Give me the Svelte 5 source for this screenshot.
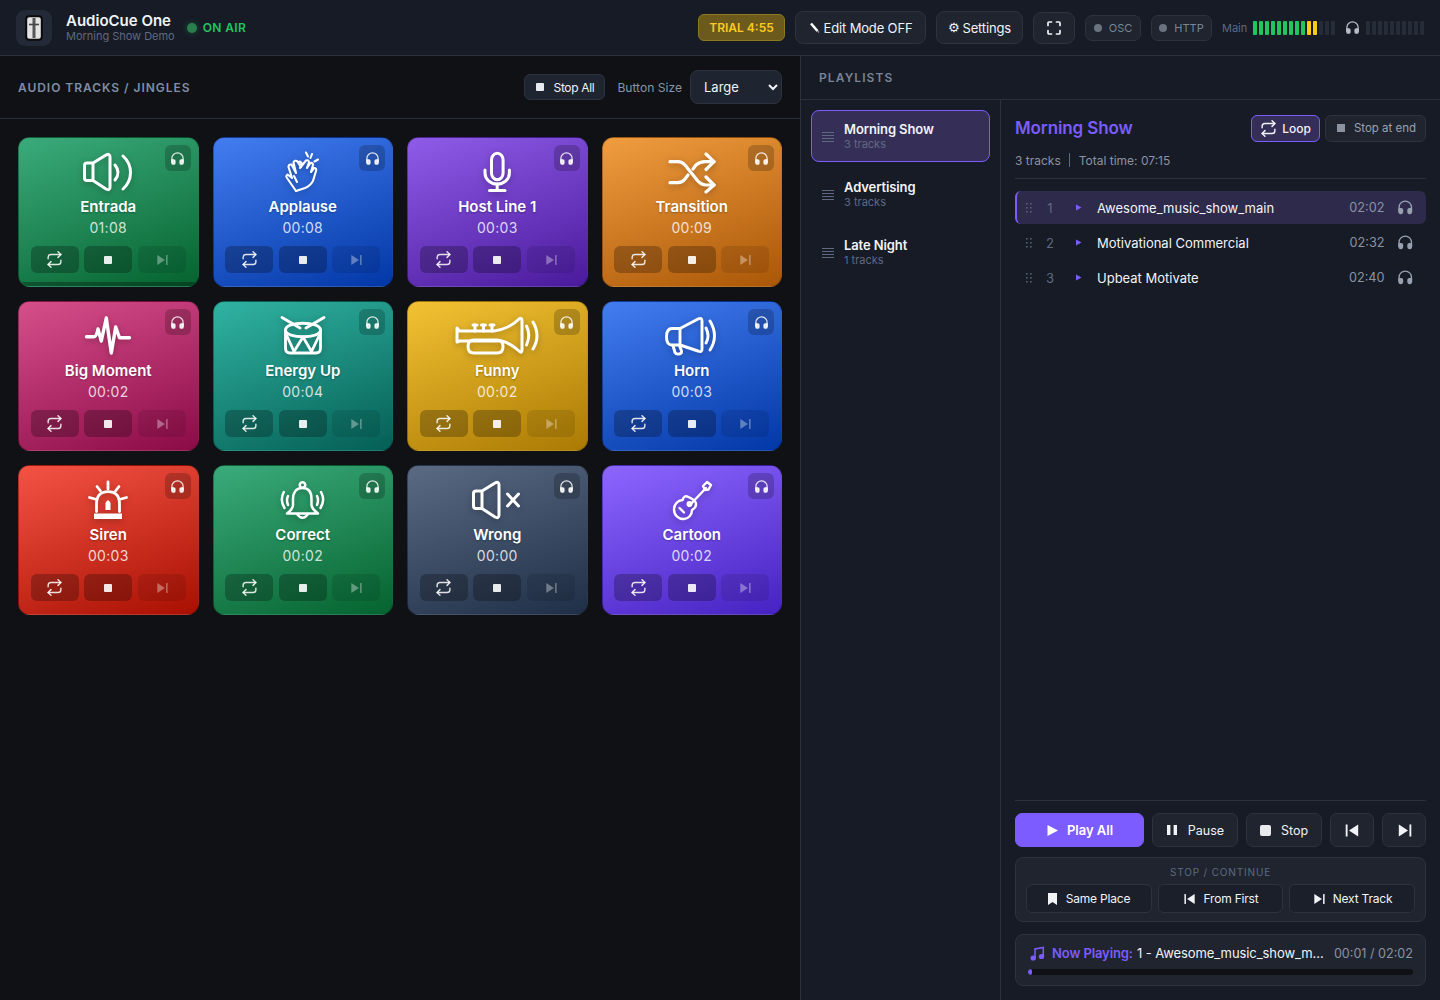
<script>
  const speaker = 'M20 12 L33 4 Q37 2 37 6 V36 Q37 40 33 38 L20 29.5 H14 Q11.5 29.5 11.5 27 V14.5 Q11.5 12 14 12 Z M20 12 V29.5';
  const art = {
    speaker: { s: [speaker, 'M42 14 Q48 21.5 42 29', 'M50 5 C60 14 60 29 50 38'] },
    clap: { s: [
      'M28 40 L19 27 Q17.5 25 19.5 23.5 L24 27 L20.5 16 Q20.5 13 23.5 13.5 L28 22 L25.5 11.5 Q26 9 29 10 L33 16',
      'M28 40 L37 37 Q42 35 45 30 L48 20 Q49 17 46 17 L43 21 L45 14 Q45 11.5 42.5 12 L39 17 L41 11 Q40.5 8.5 38 9.5 L32 17 L33.5 12 Q32.5 10 30.5 11',
      'M26 25 L29 31 M38 1.5 L40 5.5 M44 3 L42.5 7 M50 8.5 L46.5 10.5'], w: 2.1 },
    mic: { s: ['M29.5 9 a5.8 6.8 0 0 1 11.6 0 V22 a5.8 6.8 0 0 1 -11.6 0 Z', 'M23 19 V22 a12.2 11 0 0 0 24.4 0 V19', 'M35.2 33 V39.5', 'M27.5 39.5 H43'], w: 3 },
    shuffle: { s: ['M13 10.7 H21 Q25 10.7 28 14 L40 29 Q44 34 49 34 H57', 'M13 31.7 H21 Q25 31.7 28 28 L31 24', 'M36 18 L39 14 Q43 10.7 48 10.7 H57', 'M49 3 L57 10.7 L49 18.5', 'M49 26 L57 34 L49 41'], w: 3.2 },
    pulse: { s: ['M13.5 21.7 H21 Q23.5 21.5 25 14 L28.3 26 L33.3 3 L38.3 38 L42.7 12 L46.5 22.7 H56.5'], w: 3.4 },
    drum: { s: ['M14 2.5 L32 13', 'M56 2.5 L38 13', 'M17.5 15 C17.5 6 52.5 6 52.5 15 C52.5 24 17.5 24 17.5 15 Z', 'M17.5 15 V33 Q17.5 38 22 38 H48 Q52.5 38 52.5 33 V15', 'M19 21 L26 36.5 L35 22 L43.5 36.5 L51 21'], w: 2.8 },
    trumpet: { s: ['M-5 13 L-2.5 16 H32 Q47 14 57 4 Q60 2 60 6 V35 Q60 39 57 36 Q48 28 40 26 H-2.5 L-5 27 Z', 'M12 25 H35 Q41 25 41 31.5 Q41 38 35 38 H12 Q6 38 6 31.5 Q6 25 12 25 Z', 'M13 10 V16', 'M21.5 10 V16', 'M30 10 V16', 'M11 10 H15', 'M19.5 10 H23.5', 'M28 10 H32', 'M64.5 11 Q69 20 64.5 30', 'M71 7 Q79 21 71 34'], w: 3 },
    horn: { s: ['M23 13.5 L41 4 Q45 2 45 6 V34 Q45 38 41 36 L23 30 H15 Q9.5 30 9.5 22 Q9.5 13.5 15 13.5 Z', 'M23 13.5 V30', 'M16 30.5 L18 37.5 Q19 39.5 22 39 Q25 38.5 24.5 36 L22.5 30.5', 'M49 13 Q53 21 49 28', 'M53 6 Q62 21 53 35'], w: 2.9 },
    siren: { s: ['M23.5 32.5 V25 Q23.5 12.7 35 12.7 Q46.5 12.7 46.5 25 V32.5', 'M35 3 V10', 'M24 7.5 L27.5 12', 'M46 7.5 L42.5 12', 'M16.5 18.5 L22 20', 'M53.5 18.5 L48 20'], w: 2.8,
      f: ['M21 34.5 H49 V40 H21 Z', 'M32.5 31 V24 Q35 18.5 37.5 24 V31 Z'] },
    bell: { s: ['M34.5 9 C27 9 25 15 25 20 V26 Q25 30 19 34.5 H50 Q44 30 43.5 26 V20 C43.5 15 42 9 34.5 9 Z', 'M34.5 3.2 a2.8 2.8 0 1 1 -0.01 0', 'M29 35 Q34.5 42.5 40 35', 'M15.8 13 Q11.5 21 16.5 29', 'M20 17 Q18 21 20 26', 'M53 13 Q57.5 21 52.5 29', 'M49 17 Q51 21 49 26'], w: 2.5 },
    mute: { s: [speaker, 'M45.5 15 L56.5 27', 'M56.5 15 L45.5 27'] },
    guitar: { s: ['M31.5 18 C28 16 26.5 18 25.5 21 C20.5 21.5 17 25.5 17 30.5 C17 36.5 22 40.5 27 40 C31.5 39.5 35 36 35 31 C37.5 29.5 40 26.5 38.5 23 C37.5 20.5 34 19.5 31.5 18 Z', 'M32 27 L49 9', 'M46 7 L50 3 L54 6 L51.5 10.5 L48 11 Z', 'M22.5 29 L27 33.5'], w: 2.4,
      f: ['M29.5 25 a3 3 0 1 1 3 3 a3 3 0 0 1 -3 -3 Z'] }
  };
  const tracks = [
    { n: 'Entrada', t: '01:08', c: 'green', i: 'speaker', p: true },
    { n: 'Applause', t: '00:08', c: 'blue', i: 'clap' },
    { n: 'Host Line 1', t: '00:03', c: 'violet', i: 'mic' },
    { n: 'Transition', t: '00:09', c: 'orange', i: 'shuffle' },
    { n: 'Big Moment', t: '00:02', c: 'pink', i: 'pulse' },
    { n: 'Energy Up', t: '00:04', c: 'teal', i: 'drum' },
    { n: 'Funny', t: '00:02', c: 'yellow', i: 'trumpet' },
    { n: 'Horn', t: '00:03', c: 'blue', i: 'horn' },
    { n: 'Siren', t: '00:03', c: 'red', i: 'siren' },
    { n: 'Correct', t: '00:02', c: 'green', i: 'bell' },
    { n: 'Wrong', t: '00:00', c: 'slate', i: 'mute' },
    { n: 'Cartoon', t: '00:02', c: 'purple', i: 'guitar' }
  ];
  const lists = [
    { n: 'Morning Show', c: 3, on: true },
    { n: 'Advertising', c: 3 },
    { n: 'Late Night', c: 1 }
  ];
  const rows = [
    { n: 'Awesome_music_show_main', t: '02:02', on: true },
    { n: 'Motivational Commercial', t: '02:32' },
    { n: 'Upbeat Motivate', t: '02:40' }
  ];
  const mainBars = [...Array(14).keys()].map((i) => (i < 9 ? 'g' : i < 11 ? 'y' : ''));
  const monBars = [...Array(10).keys()];
  const dots = [[1, 1], [5, 1], [1, 5], [5, 5], [1, 9], [5, 9]];
</script>

{#snippet phones(cls)}
  <svg class={cls} viewBox="0 0 24 24" fill="none" stroke="currentColor" stroke-width="2" stroke-linecap="round" stroke-linejoin="round"><path d="M3 18v-6a9 9 0 0 1 18 0v6" /><path fill="currentColor" d="M21 19a2 2 0 0 1-2 2h-1a2 2 0 0 1-2-2v-3a2 2 0 0 1 2-2h3zM3 19a2 2 0 0 0 2 2h1a2 2 0 0 0 2-2v-3a2 2 0 0 0-2-2H3z" /></svg>
{/snippet}
{#snippet repeat(cls)}
  <svg class={cls} viewBox="0 0 24 24" fill="none" stroke="currentColor" stroke-width="2" stroke-linecap="round" stroke-linejoin="round"><path d="M17 1l4 4-4 4" /><path d="M3 11V9a4 4 0 0 1 4-4h14" /><path d="M7 23l-4-4 4-4" /><path d="M21 13v2a4 4 0 0 1-4 4H3" /></svg>
{/snippet}
{#snippet next(cls)}
  <svg class={cls} viewBox="0 0 24 24" fill="currentColor"><path d="M4 3.5 L17 12 L4 20.5 Z" /><rect x="19" y="3.5" width="2.6" height="17" /></svg>
{/snippet}
{#snippet prev(cls)}
  <svg class={cls} viewBox="0 0 24 24" fill="currentColor"><path d="M20 3.5 L7 12 L20 20.5 Z" /><rect x="2.4" y="3.5" width="2.6" height="17" /></svg>
{/snippet}

<div class="app">
  <header class="top">
    <div class="logo">
      <svg width="18" height="26" viewBox="0 0 18 26"><rect x="1.2" y="1.2" width="15.6" height="23.6" rx="3" fill="#e4e4e4" stroke="#0a0a0a" stroke-width="2" /><path d="M9 3 V23" stroke="#555" stroke-width="3" /><path d="M4 9.5 H14" stroke="#444" stroke-width="1.6" /></svg>
    </div>
    <div class="brand">
      <div class="brand-name">AudioCue One</div>
      <div class="brand-sub">Morning Show Demo</div>
    </div>
    <div class="air"><span class="air-dot"></span>ON AIR</div>
    <div class="spacer"></div>
    <div class="trial">TRIAL 4:55</div>
    <button class="hbtn edit"><svg width="11" height="11" viewBox="0 0 11 11"><path d="M2 1.5 L8.5 9" stroke="#fff" stroke-width="2.6" /><path d="M8.5 9 L10 10.5" stroke="#8a8f99" stroke-width="1.4" /></svg>Edit Mode OFF</button>
    <button class="hbtn settings"><span class="gear">⚙</span>Settings</button>
    <button class="hbtn full" aria-label="Fullscreen">
      <svg width="14" height="14" viewBox="0 0 14 14" fill="none" stroke="currentColor" stroke-width="1.7" stroke-linecap="round" stroke-linejoin="round"><path d="M1 4.5 V2 Q1 1 2 1 H4.5 M9.5 1 H12 Q13 1 13 2 V4.5 M13 9.5 V12 Q13 13 12 13 H9.5 M4.5 13 H2 Q1 13 1 12 V9.5" /></svg>
    </button>
    <div class="status osc"><span class="sdot"></span>OSC</div>
    <div class="status http"><span class="sdot"></span>HTTP</div>
    <div class="meters">
      <span class="main-label">Main</span>
      <div class="bars">{#each mainBars as b}<i class={b}></i>{/each}</div>
      {@render phones('meter-phones')}
      <div class="bars">{#each monBars as _}<i></i>{/each}</div>
    </div>
  </header>

  <div class="body">
    <section class="left">
      <div class="left-head">
        <h2>AUDIO TRACKS / JINGLES</h2>
        <div class="left-tools">
          <button class="stop-all"><span class="sq"></span>Stop All</button>
          <span class="size-label">Button Size</span>
          <select class="size"><option>Large</option></select>
        </div>
      </div>
      <div class="grid">
        {#each tracks as t}
          <article class="card {t.c}">
            <button class="cue" aria-label="Cue">{@render phones('cue-icon')}</button>
            <svg class="art" viewBox="-10 0 90 44" width="90" height="44" fill="none" stroke="#fff" stroke-width={art[t.i].w ?? 3} stroke-linecap="round" stroke-linejoin="round">
              {#each art[t.i].s as d}<path {d} />{/each}
              {#each art[t.i].f ?? [] as d}<path {d} fill="#fff" stroke="none" />{/each}
            </svg>
            <div class="name">{t.n}</div>
            <div class="time">{t.t}</div>
            <div class="acts">
              <button class="act" aria-label="Loop">{@render repeat('act-rep')}</button>
              <button class="act" aria-label="Stop"><span class="stop"></span></button>
              <button class="act dim" aria-label="Next">{@render next('act-next')}</button>
            </div>
            {#if t.p}<div class="prog"></div>{/if}
          </article>
        {/each}
      </div>
    </section>

    <section class="right">
      <div class="pl-head">PLAYLISTS</div>
      <div class="pl-body">
        <aside class="pl-side">
          {#each lists as l}
            <div class="pl-item" class:on={l.on}>
              <svg class="lines" width="12" height="11" viewBox="0 0 12 11" stroke="currentColor" stroke-width="1"><path d="M0 .5H12M0 3.5H12M0 6.5H12M0 9.5H12" /></svg>
              <div>
                <div class="pl-name">{l.n}</div>
                <div class="pl-count">{l.c} tracks</div>
              </div>
            </div>
          {/each}
        </aside>
        <div class="pl-main">
          <div class="pl-title-row">
            <h3>Morning Show</h3>
            <button class="mode loop">{@render repeat('loop-icon')}Loop</button>
            <button class="mode end"><span class="end-sq"></span>Stop at end</button>
          </div>
          <div class="meta"><span>3 tracks</span><span class="sep"></span><span>Total time: 07:15</span></div>
          <div class="rows">
            {#each rows as r, i}
              <div class="row" class:on={r.on}>
                <svg class="grip" width="7" height="11" viewBox="0 0 7 11" fill="currentColor">{#each dots as [x, y]}<rect {x} {y} width="1.6" height="1.6" />{/each}</svg>
                <span class="num">{i + 1}</span>
                <svg class="tri" width="7" height="7" viewBox="0 0 7 7" fill="currentColor"><path d="M1 .5 L6.5 3.5 L1 6.5 Z" /></svg>
                <span class="row-name">{r.n}</span>
                <span class="row-time">{r.t}</span>
                {@render phones('row-phones')}
              </div>
            {/each}
          </div>
          <div class="transport">
            <div class="tr-main">
              <button class="tb play"><svg width="13" height="13" viewBox="0 0 13 13" fill="currentColor"><path d="M1.5 1 L12 6.5 L1.5 12 Z" /></svg>Play All</button>
              <button class="tb pause"><svg width="12" height="12" viewBox="0 0 12 12" fill="currentColor"><rect x="1" y="1" width="3.4" height="10" /><rect x="7.6" y="1" width="3.4" height="10" /></svg>Pause</button>
              <button class="tb stopb"><span class="tsq"></span>Stop</button>
              <button class="tb skip" aria-label="Previous">{@render prev('skip-icon')}</button>
              <button class="tb skip" aria-label="Next">{@render next('skip-icon')}</button>
            </div>
            <div class="cont">
              <div class="cont-label">STOP / CONTINUE</div>
              <div class="cont-btns">
                <button class="cb"><svg width="9" height="12" viewBox="0 0 9 12" fill="currentColor"><path d="M0 0 H9 V12 L4.5 9 L0 12 Z" /></svg>Same Place</button>
                <button class="cb">{@render prev('cb-icon')}From First</button>
                <button class="cb">{@render next('cb-icon')}Next Track</button>
              </div>
            </div>
            <div class="now">
              <div class="now-line">
                <svg width="15" height="15" viewBox="0 0 15 15" fill="none" stroke="currentColor" stroke-width="1.5"><path d="M5 12 V3 L13.3 1.5 V10.5" /><ellipse cx="3.2" cy="12" rx="2" ry="1.8" fill="currentColor" /><ellipse cx="11.5" cy="10.5" rx="2" ry="1.8" fill="currentColor" /></svg>
                <span class="now-label">Now Playing:</span>
                <span class="now-name">1 - Awesome_music_show_m...</span>
                <span class="now-time">00:01 / 02:02</span>
              </div>
              <div class="now-bar"><div class="now-fill" style="width: 1%"></div></div>
            </div>
          </div>
        </div>
      </div>
    </section>
  </div>
</div>

<style>
  :global(body) { margin: 0; background: #0f1115; }
  * { box-sizing: border-box; }
  button, select { font-family: inherit; }
  button { cursor: pointer; }
  .app { width: 1440px; height: 1000px; display: flex; flex-direction: column; overflow: hidden; background: #0f1115; color: #f0f2f6; font-family: Inter, "Noto Sans", sans-serif; }

  .top { height: 56px; flex: none; display: flex; align-items: center; padding: 0 16px; background: #161b25; border-bottom: 1px solid #2a303c; }
  .logo { width: 36px; height: 36px; border-radius: 9px; background: #232936; display: flex; align-items: center; justify-content: center; margin-right: 14px; }
  .brand-name { font-size: 15px; font-weight: 600; line-height: 18px; color: #f1f3f7; }
  .brand-sub { font-size: 11px; line-height: 13px; color: #5f6980; letter-spacing: -.02px; }
  .air { display: flex; align-items: center; margin-left: 12px; color: #22c55e; font-size: 12px; font-weight: 600; letter-spacing: .4px; }
  .air-dot { width: 10px; height: 10px; border-radius: 50%; background: #2a7d4d; box-shadow: 0 0 6px rgba(34, 197, 94, .35); margin-right: 6px; }
  .spacer { flex: 1; }
  .trial { width: 87px; height: 27px; display: flex; align-items: center; justify-content: center; border-radius: 6px; background: #6b5a1c; border: 1px solid #8f7822; color: #fbcb24; font-size: 12px; font-weight: 600; margin-right: 10px; }
  .hbtn { height: 33px; border-radius: 8px; background: #1f242f; border: 1px solid #2c3240; color: #f1f3f7; font-size: 13px; letter-spacing: -.15px; padding: 0; margin-right: 10px; display: flex; align-items: center; justify-content: center; }
  .edit { width: 131px; gap: 4px; }
  .settings { width: 87px; gap: 3px; }
  .gear { font-family: "DejaVu Sans", sans-serif; font-size: 13px; }
  .full { width: 42px; height: 32px; }
  .status { height: 26px; border-radius: 7px; background: #1f242f; border: 1px solid #2c3240; color: #7b8496; font-size: 11px; display: flex; align-items: center; justify-content: center; gap: 7px; margin-right: 10px; }
  .osc { width: 56px; }
  .http { width: 61px; }
  .sdot { width: 8px; height: 8px; border-radius: 50%; background: #6b7280; }
  .meters { display: flex; align-items: center; }
  .main-label { font-size: 11px; color: #5f6980; width: 31px; }
  .bars { display: flex; gap: 2px; }
  .bars i { width: 4px; height: 14px; border-radius: 1px; background: #262c38; }
  .bars i.g { background: #22c55e; }
  .bars i.y { background: #facc15; }
  .meter-phones { width: 15px; height: 15px; color: #b8bdc7; margin: 0 6px 0 10px; }

  .body { flex: 1; display: flex; min-height: 0; }
  .left { width: 801px; flex: none; border-right: 1px solid #2a303c; background: #0f1115; }
  .left-head { height: 63px; display: flex; align-items: center; justify-content: space-between; padding: 0 18px; border-bottom: 1px solid #2a303c; }
  .left-head h2 { margin: 0; font-size: 12px; font-weight: 600; letter-spacing: .96px; color: #7f8ea6; }
  .left-tools { display: flex; align-items: center; }
  .stop-all { width: 81px; height: 26px; border-radius: 6px; background: #1e2430; border: 1px solid #2c3240; color: #f1f3f7; font-size: 12px; display: flex; align-items: center; justify-content: center; gap: 10px; padding: 0; letter-spacing: -.35px; }
  .sq { width: 8px; height: 8px; border-radius: 1px; background: #e8eaee; }
  .size-label { font-size: 12.1px; color: #8a93a4; margin: 0 8px 0 12px; }
  .size { width: 92px; height: 34px; border-radius: 8px; background: #1e2430; border: 1px solid #2c3240; color: #f1f3f7; font-size: 13px; padding: 0 9px; }

  .grid { display: grid; grid-template-columns: repeat(4, 1fr); grid-auto-rows: 150px; gap: 14px; padding: 18px 18px 0; }
  .card { position: relative; border-radius: 12px; overflow: hidden; display: flex; flex-direction: column; align-items: center; padding: 13px 13px 13px; border: 1px solid rgba(0, 0, 0, .18); --a: #000; --b: #000; background: linear-gradient(160deg, var(--a), var(--b)); }
  .green { --a: #3bab7b; --b: #05632f; }
  .blue { --a: #437df0; --b: #0237a6; }
  .violet { --a: #8e5ce8; --b: #4a1a9c; }
  .orange { --a: #f09c3f; --b: #aa5707; }
  .pink { --a: #d64f8b; --b: #8b0b47; }
  .teal { --a: #30b3a2; --b: #055f55; }
  .yellow { --a: #f3c233; --b: #aa7a04; }
  .red { --a: #f45344; --b: #a81002; }
  .slate { --a: #5a6a83; --b: #1f2f47; }
  .purple { --a: #8d66ff; --b: #4622c2; }
  .cue { position: absolute; top: 7px; right: 7px; width: 26px; height: 26px; border-radius: 6px; border: 0; padding: 0; background: rgba(0, 0, 0, .2); color: rgba(255, 255, 255, .85); display: flex; align-items: center; justify-content: center; }
  .cue-icon { width: 15px; height: 15px; }
  .art { flex: none; filter: drop-shadow(0 2px 3px rgba(0, 0, 0, .25)); }
  .name { margin-top: 2px; font-size: 15px; line-height: 20px; font-weight: 600; color: #fff; text-shadow: 0 1px 2px rgba(0, 0, 0, .3); }
  .time { margin-top: 1px; font-size: 14px; line-height: 20px; color: rgba(255, 255, 255, .8); letter-spacing: .3px; }
  .acts { margin-top: auto; width: 155px; display: flex; justify-content: space-between; }
  .act { width: 48px; height: 27px; border-radius: 6px; border: 0; padding: 0; background: rgba(0, 0, 0, .25); color: rgba(255, 255, 255, .85); display: flex; align-items: center; justify-content: center; }
  .act.dim { background: rgba(0, 0, 0, .1); color: rgba(255, 255, 255, .35); }
  .act-rep { width: 17px; height: 17px; }
  .act-next { width: 14px; height: 14px; }
  .stop { width: 8px; height: 8px; background: rgba(255, 255, 255, .9); border-radius: 1px; }
  .prog { position: absolute; left: 0; right: 0; bottom: 0; height: 4px; background: rgba(0, 0, 0, .3); }

  .right { flex: 1; min-width: 0; display: flex; flex-direction: column; background: #161b25; }
  .pl-head { height: 44px; flex: none; display: flex; align-items: center; padding: 0 18px; border-bottom: 1px solid #2a303c; font-size: 12px; font-weight: 600; letter-spacing: 1.1px; color: #7a8494; }
  .pl-body { flex: 1; display: flex; min-height: 0; }
  .pl-side { width: 200px; flex: none; padding: 10px; border-right: 1px solid #2a303c; display: flex; flex-direction: column; gap: 6px; }
  .pl-item { height: 52px; border-radius: 8px; border: 1px solid transparent; display: flex; align-items: center; padding: 0 10px; gap: 10px; }
  .pl-item.on { background: #352f58; border-color: #7c5cff; }
  .lines { color: #5f6980; margin-top: 2px; flex: none; }
  .pl-name { font-size: 13px; font-weight: 600; line-height: 16px; color: #f1f3f7; letter-spacing: -.1px; }
  .pl-count { font-size: 11px; line-height: 14px; color: #5f6980; }
  .pl-main { flex: 1; min-width: 0; padding: 14px; display: flex; flex-direction: column; }
  .pl-title-row { display: flex; align-items: center; gap: 5px; height: 28px; }
  .pl-title-row h3 { margin: 0; flex: 1; font-size: 17px; font-weight: 600; color: #7c5cff; letter-spacing: -.1px; }
  .mode { height: 27px; border-radius: 6px; font-size: 12px; display: flex; align-items: center; justify-content: center; padding: 0; }
  .loop { width: 69px; gap: 5px; background: #352f58; border: 1px solid #7c5cff; color: #f1f3f7; font-weight: 500; }
  .loop-icon { width: 17px; height: 17px; }
  .end { width: 101px; gap: 9px; padding-left: 2px; background: #1f242f; border: 1px solid #2c3240; color: #99a1b0; font-size: 11.5px; }
  .end-sq { width: 8px; height: 8px; background: #8b92a0; }
  .meta { height: 37px; display: flex; align-items: center; gap: 8px; font-size: 12px; color: #8a93a4; border-bottom: 1px solid #2a303c; }
  .sep { width: 1px; height: 14px; background: #5f6980; margin-right: 1px; }
  .rows { flex: 1; padding-top: 12px; display: flex; flex-direction: column; gap: 2px; min-height: 0; }
  .row { height: 33px; border-radius: 6px; display: flex; align-items: center; padding: 0 13px 0 9px; border-left: 1px solid transparent; }
  .row.on { background: #2d2a4b; border-left: 2px solid #7c5cff; padding-left: 8px; }
  .grip { color: #565f70; flex: none; }
  .num { width: 36px; text-align: center; font-size: 13px; color: #5f6980; flex: none; }
  .tri { color: #7c5cff; margin-left: 7px; flex: none; }
  .row-name { margin-left: 15px; flex: 1; font-size: 13px; color: #f1f3f7; }
  .row-time { font-size: 12.7px; color: #8a93a4; margin-right: 12px; }
  .row-phones { width: 16.5px; height: 16.5px; color: #99a1b0; flex: none; }

  .transport { border-top: 1px solid #2a303c; padding-top: 12px; display: flex; flex-direction: column; }
  .tr-main { display: flex; gap: 8px; }
  .tb { height: 34px; border-radius: 7px; background: #1f242f; border: 1px solid #2c3240; color: #f1f3f7; font-size: 12.5px; display: flex; align-items: center; justify-content: center; gap: 10px; padding: 0; }
  .play { width: 129px; background: #7c5cff; border-color: #7c5cff; font-weight: 600; font-size: 13px; color: #fff; gap: 8px; }
  .pause { width: 86px; }
  .stopb { width: 76px; }
  .tsq { width: 11px; height: 11px; border-radius: 2px; background: #e8eaee; }
  .skip { width: 44px; }
  .skip-icon { width: 17px; height: 17px; }
  .cont { margin-top: 10px; height: 65px; border-radius: 8px; background: #1f242f; border: 1px solid #2c3240; padding: 8px 10px 0; }
  .cont-label { text-align: center; font-size: 10px; letter-spacing: .85px; line-height: 12px; color: #5f6980; }
  .cont-btns { margin-top: 6px; display: grid; grid-template-columns: 126px 125px 126px; gap: 6px; }
  .cb { height: 29px; border-radius: 6px; background: #1a1f29; border: 1px solid #2c3240; color: #f1f3f7; font-size: 12px; display: flex; align-items: center; justify-content: center; gap: 9px; padding: 0; letter-spacing: -.2px; }
  .cb-icon { width: 14px; height: 14px; margin-right: -2px; }
  .now { margin-top: 12px; height: 52px; border-radius: 8px; background: #1f242f; border: 1px solid #2c3240; padding: 9px 12px 0; color: #7c5cff; }
  .now-line { display: flex; align-items: center; height: 18px; font-size: 13px; white-space: nowrap; padding-left: 2px; }
  .now-label { margin-left: 7px; font-weight: 600; letter-spacing: -.1px; }
  .now-name { margin-left: 4px; flex: 1; color: #f1f3f7; letter-spacing: -.08px; }
  .now-time { color: #8a93a4; font-size: 12.6px; }
  .now-bar { margin-top: 7px; height: 6px; border-radius: 3px; background: #0f1115; overflow: hidden; }
  .now-fill { height: 100%; background: #7c5cff; border-radius: 3px; }
</style>
